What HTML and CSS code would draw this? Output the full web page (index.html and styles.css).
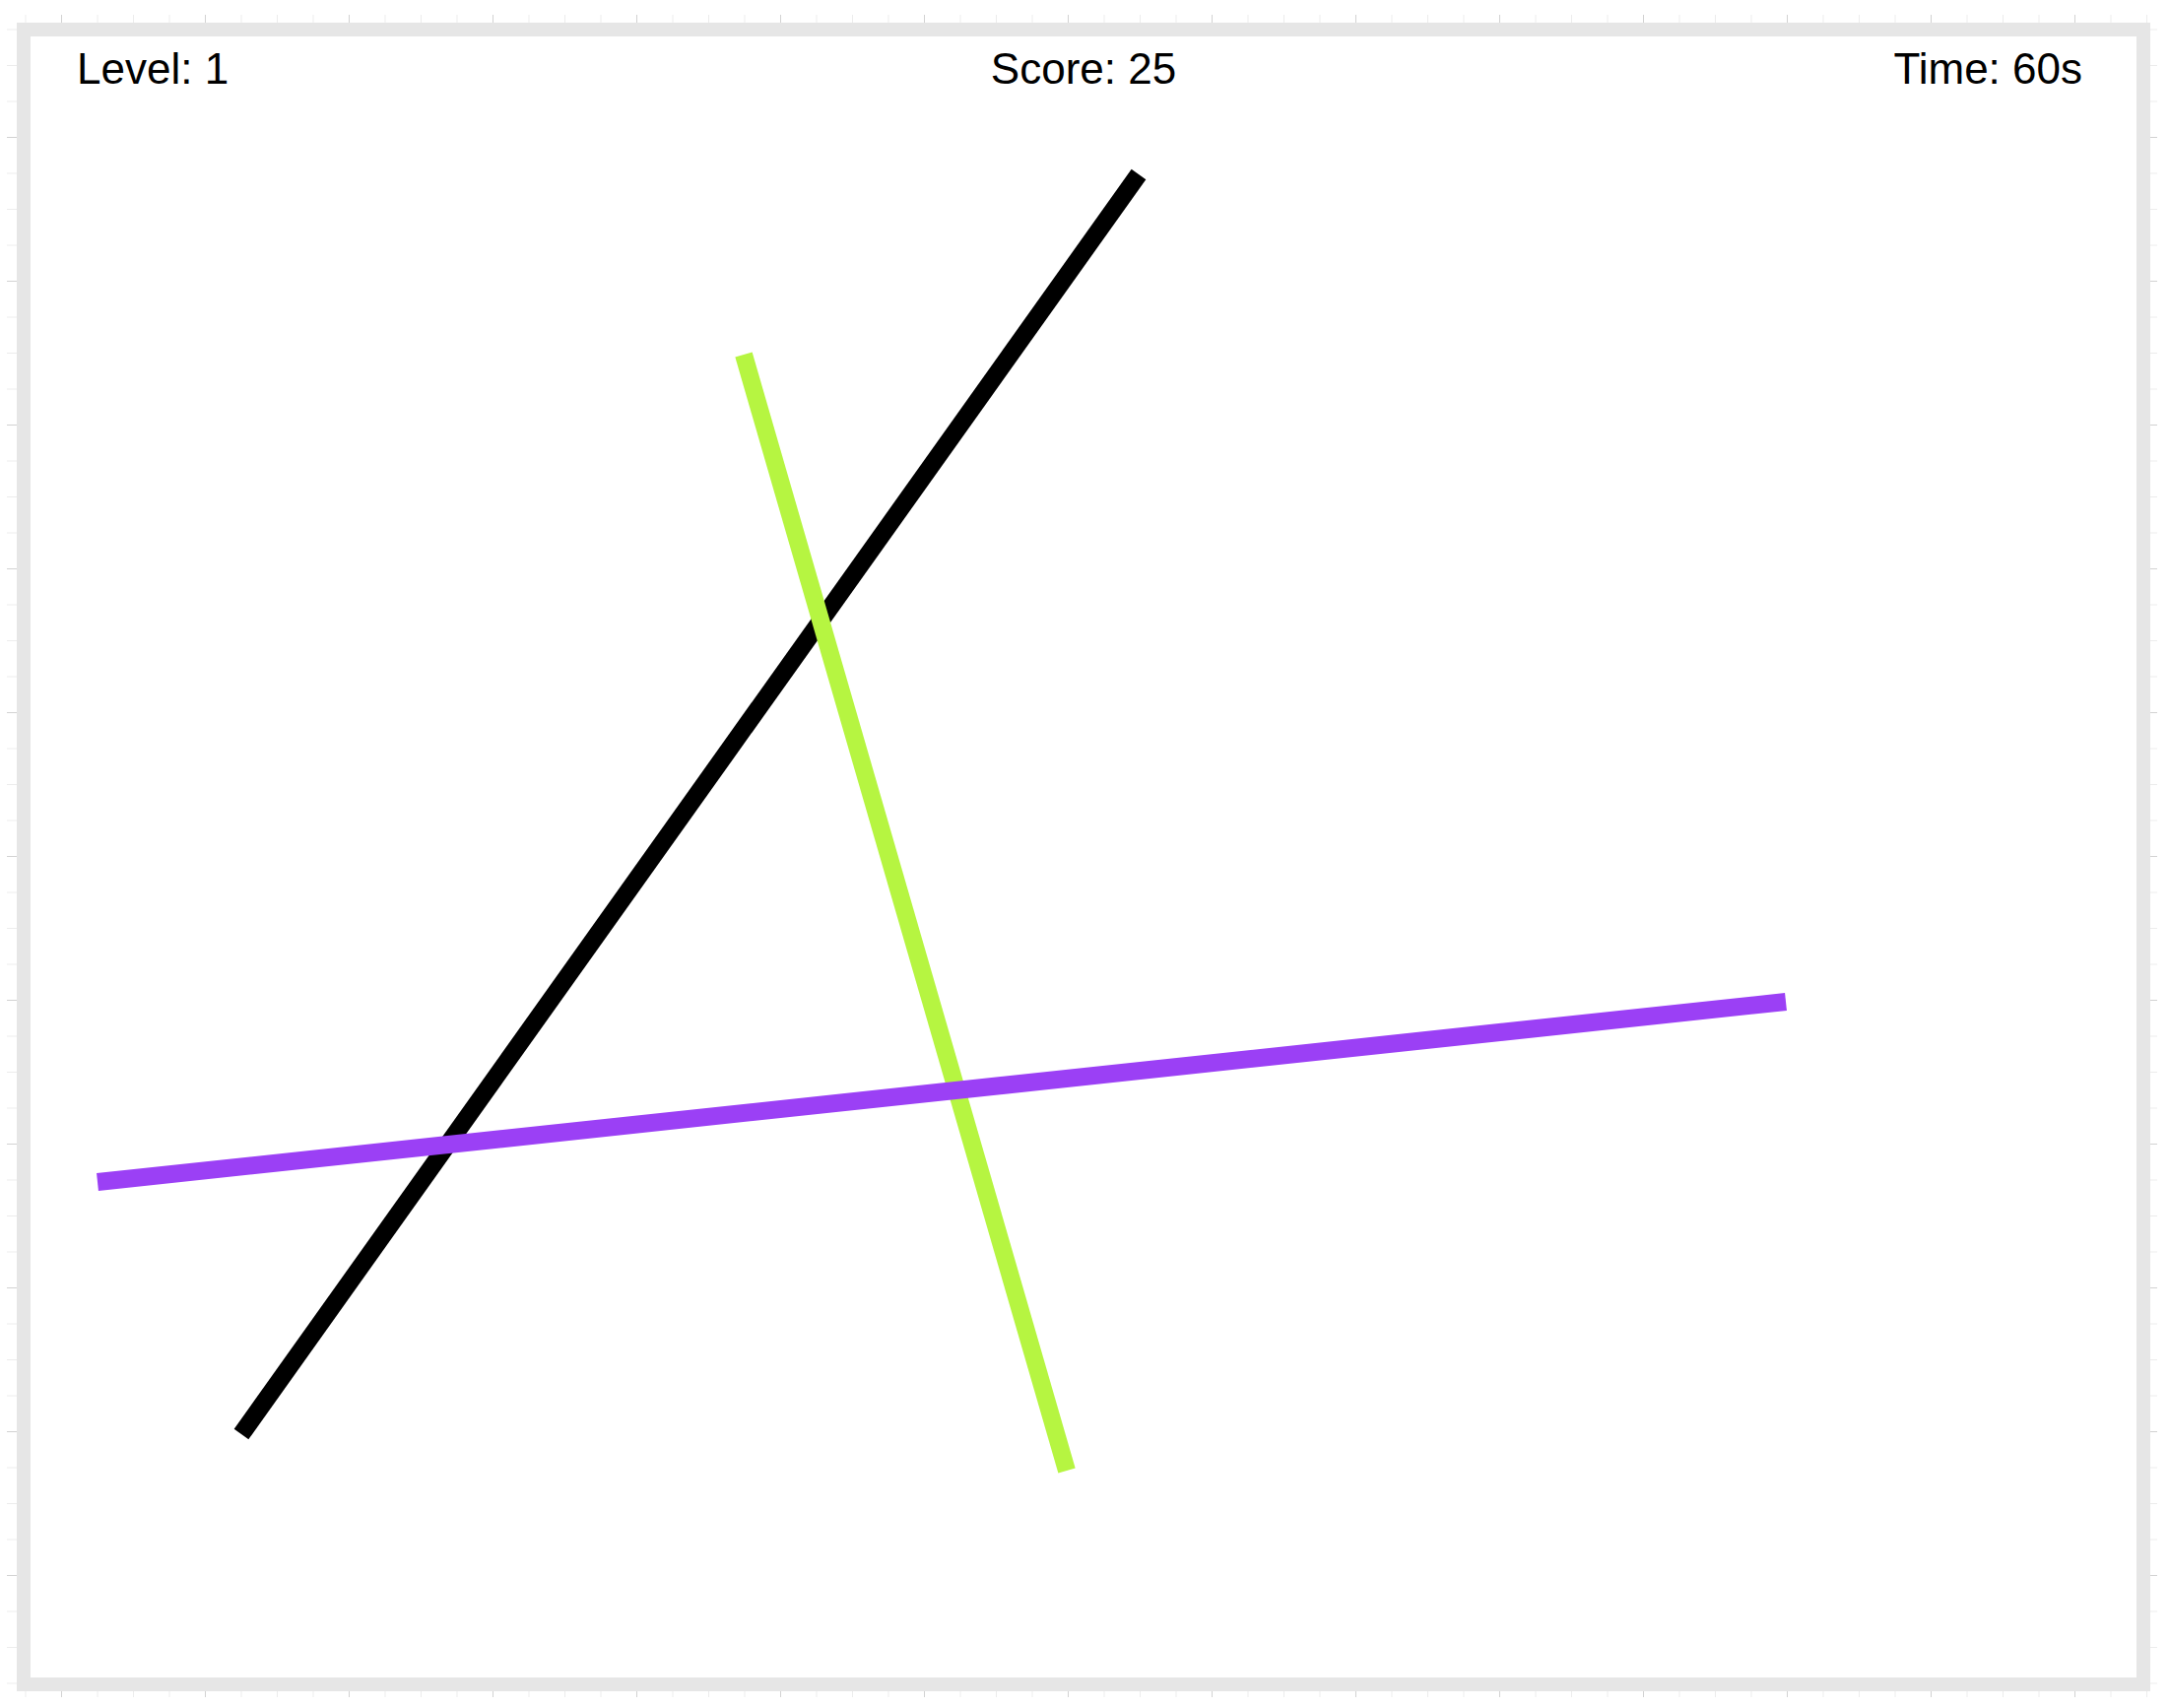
FILE: index.html
```html
<!DOCTYPE html>
<html lang="en">
<head>
  <meta charset="UTF-8">
  <meta name="viewport" content="width=device-width, initial-scale=1.0">
  <link rel="stylesheet" href="styles.css">
  <title>Lines</title>
</head>
<body>

<div class="desk">
  <div id="board">
    <svg id="canvas" viewBox="0 0 2138 1666" preserveAspectRatio="none">
      <line class="stick black" x1="1125" y1="140" x2="214" y2="1419" />
      <line class="stick green" x1="724" y1="323" x2="1052" y2="1456" />
      <line class="stick purple" x1="68" y1="1163" x2="1782" y2="980" />
    </svg>
    <div class="hud">
      <span class="level">Level: <span id="level">1</span></span>
      <span class="score">Score: <span id="score">25</span></span>
      <span class="time">Time: <span id="time">60</span>s</span>
    </div>
  </div>
</div>

</body>
</html>
```

FILE: styles.css
```css
body {
  margin: 0;
  background: #fff;
  font-family: "Liberation Sans", Arial, sans-serif;
}

.desk {
  display: inline-block;
  margin: 15px 0 0 7px;
  padding: 8px 7px 6px 10px;
  background-image:
    linear-gradient(to right, #d2d2d2 1px, transparent 1px),
    linear-gradient(to bottom, #d2d2d2 1px, transparent 1px),
    linear-gradient(to right, #ececec 1px, transparent 1px),
    linear-gradient(to bottom, #ececec 1px, transparent 1px);
  background-size: 146px 100%, 100% 146px, 36.5px 100%, 100% 36.5px;
  background-position: 55px 0, 0 124px, 18.5px 0, 0 14.5px;
}

#board {
  position: relative;
  width: 2138px;
  height: 1666px;
  border: 14px solid #e6e6e6;
  background: #fff;
}

#canvas {
  display: block;
  width: 100%;
  height: 100%;
}

.stick {
  stroke-width: 18;
  stroke-linecap: butt;
}

.black { stroke: #000; }
.green { stroke: #b6f541; }
.purple { stroke: #9b40f5; }

.hud {
  position: absolute;
  top: 8px;
  left: 0;
  right: 0;
  display: grid;
  grid-template-columns: 1fr auto 1fr;
  font-size: 44px;
  line-height: 50px;
  color: #000;
}

.level {
  padding-left: 47px;
}

.time {
  justify-self: end;
  padding-right: 55px;
}
```
